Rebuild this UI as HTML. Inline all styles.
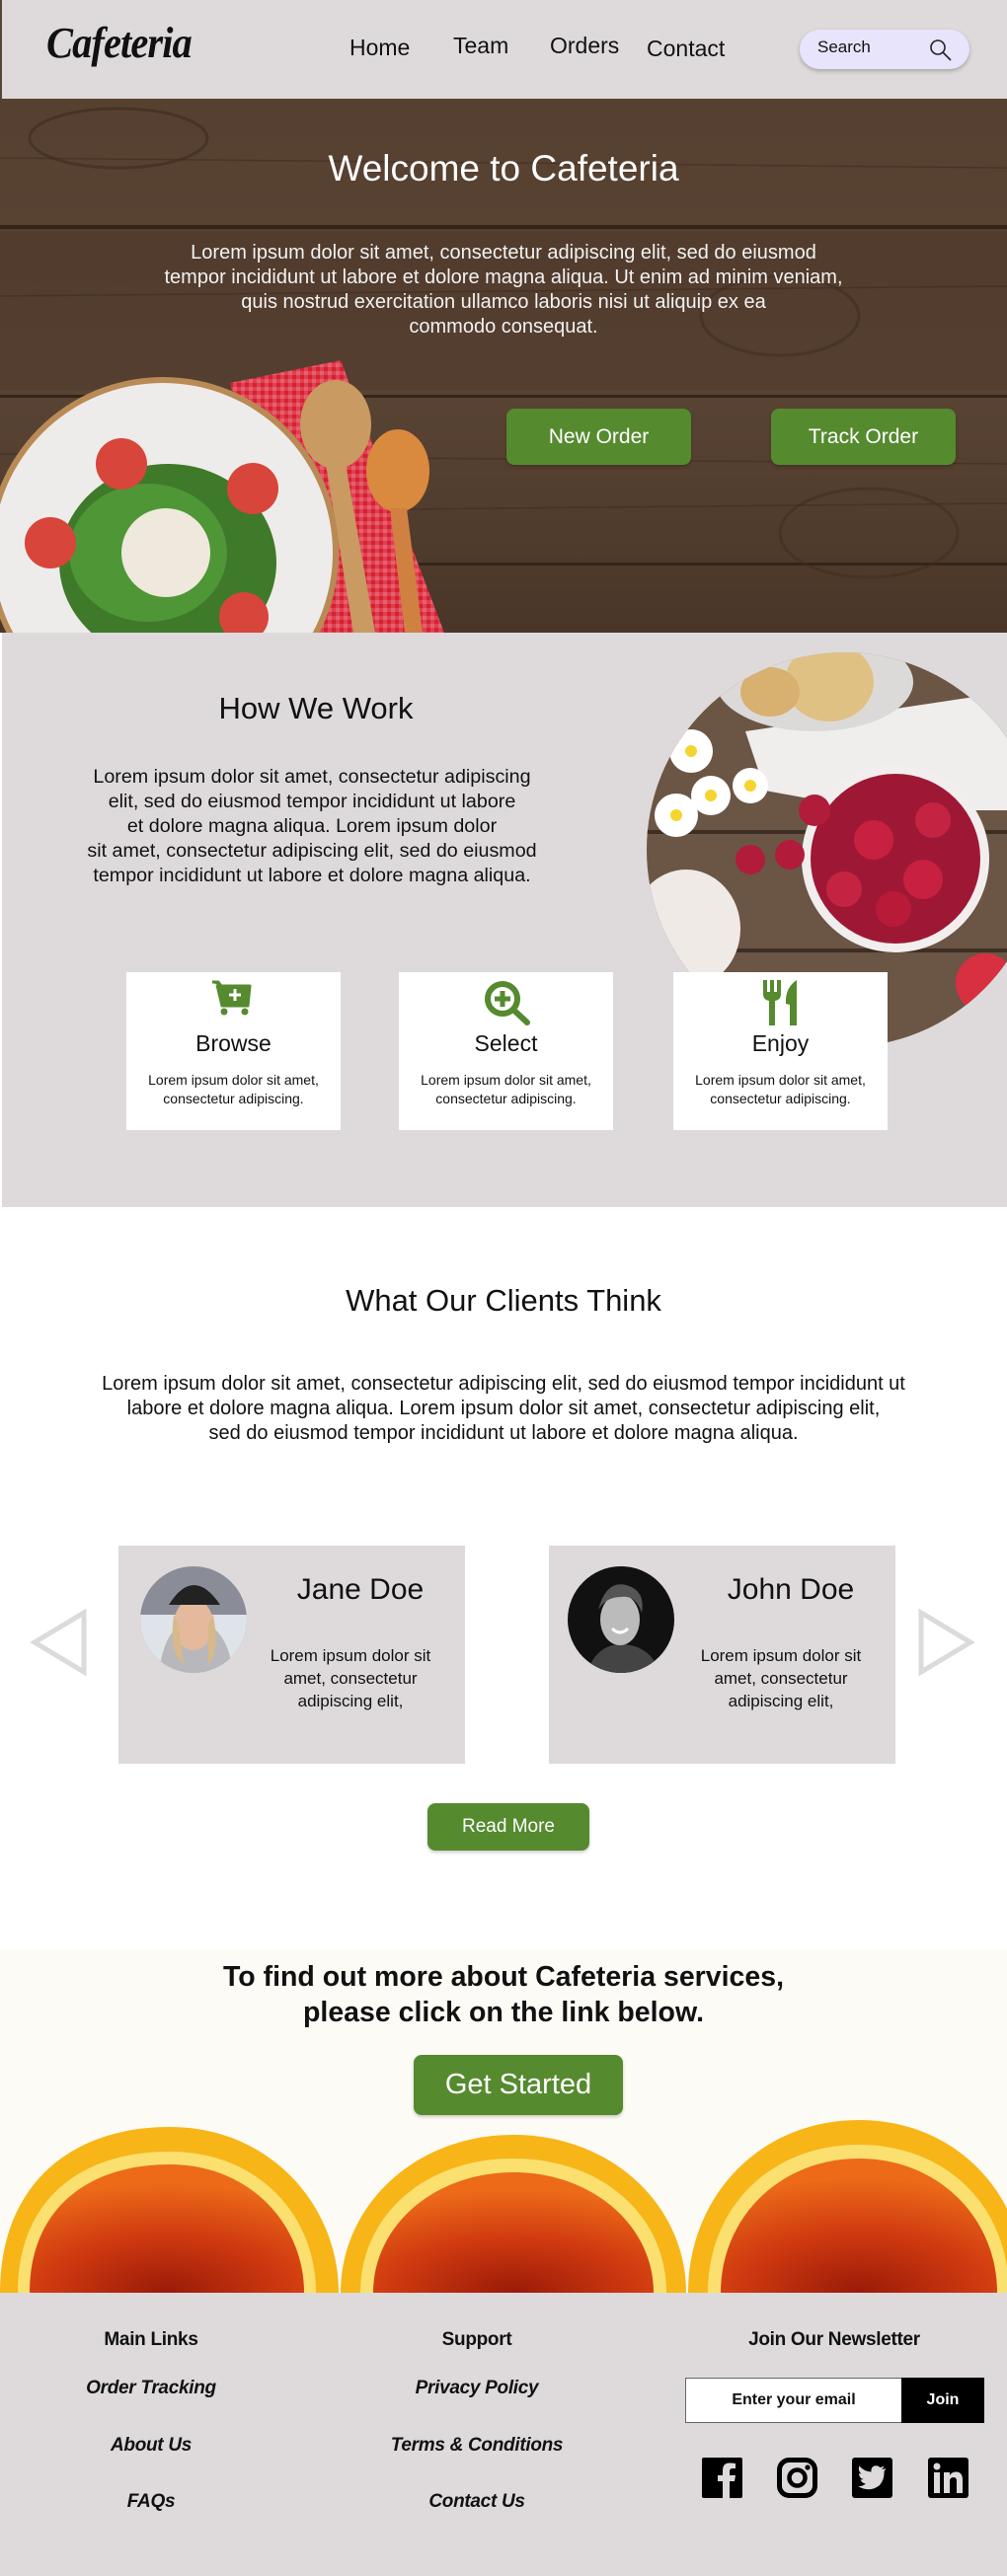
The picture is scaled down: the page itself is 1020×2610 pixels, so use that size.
<!DOCTYPE html>
<html><head><meta charset="utf-8">
<style>
*{margin:0;padding:0;box-sizing:border-box}
body{width:1020px;height:2610px;position:relative;overflow:hidden;background:#fff;font-family:"Liberation Sans",sans-serif;color:#111}
.a{position:absolute}
.c{text-align:center;white-space:nowrap}
.btn{position:absolute;background:#558a2f;color:#fff;border-radius:8px;text-align:center;box-shadow:0 2px 3px rgba(0,0,0,.2)}
.card{position:absolute;background:#fff;width:217px;height:160px;top:985px}
.card h3{position:absolute;top:59px;width:100%;text-align:center;font-weight:normal;font-size:23px}
.card p{position:absolute;top:100px;width:100%;text-align:center;font-size:14px;line-height:19px}
.tc{position:absolute;background:#dedadb;top:1566px;width:351px;height:221px}
.tc h3{position:absolute;left:150px;width:190px;text-align:center;top:28px;font-weight:normal;font-size:30px}
.tc p{position:absolute;left:135px;width:200px;text-align:center;top:100px;font-size:17px;line-height:23px}
.fl{position:absolute;width:300px;text-align:center;font-size:19px;font-style:italic;font-weight:bold;letter-spacing:-0.3px}
.fh{position:absolute;width:300px;text-align:center;font-size:19px;font-weight:bold;top:2360px;letter-spacing:-0.3px}
</style></head><body>

<!-- header -->
<div class="a" style="left:0;top:0;width:1020px;height:100px;background:#dedadb;border-left:2px solid #5a4636"></div>
<div class="a" style="left:47px;top:18px;font-family:'Liberation Serif',serif;font-style:italic;font-weight:bold;font-size:44px;letter-spacing:-1px;transform:scaleX(0.92);transform-origin:left">Cafeteria</div>
<div class="a" style="left:354px;top:35px;font-size:23px">Home</div>
<div class="a" style="left:459px;top:33px;font-size:23px">Team</div>
<div class="a" style="left:557px;top:33px;font-size:23px">Orders</div>
<div class="a" style="left:655px;top:36px;font-size:23px">Contact</div>
<div class="a" style="left:810px;top:30px;width:172px;height:40px;border-radius:20px;background:#e8e4fb;box-shadow:0 2px 4px rgba(0,0,0,.25)"></div>
<div class="a" style="left:828px;top:38px;font-size:17px">Search</div>
<svg class="a" style="left:940px;top:38px" width="26" height="26" viewBox="0 0 26 26"><circle cx="10" cy="10" r="7" fill="none" stroke="#222" stroke-width="1.6"/><line x1="15" y1="15" x2="23" y2="23" stroke="#222" stroke-width="1.6"/></svg>

<!-- hero -->
<svg class="a" style="left:0;top:100px" width="1020" height="541" viewBox="0 0 1020 541">
<defs>
<linearGradient id="w" x1="0" y1="0" x2="0" y2="1"><stop offset="0" stop-color="#4e3a2c"/><stop offset=".5" stop-color="#5a4535"/><stop offset="1" stop-color="#4a3628"/></linearGradient>
<pattern id="chk" width="8" height="8" patternUnits="userSpaceOnUse"><rect width="8" height="8" fill="#fff"/><rect width="4" height="4" fill="#d62030"/><rect x="4" y="4" width="4" height="4" fill="#e46070"/><rect x="4" width="4" height="4" fill="#e04050"/><rect y="4" width="4" height="4" fill="#e04050"/></pattern>
</defs>
<rect width="1020" height="541" fill="url(#w)"/>
<rect y="0" width="1020" height="128" fill="#5b4434" opacity=".6"/>
<rect y="128" width="1020" height="4" fill="#33251b"/>
<rect y="300" width="1020" height="3" fill="#33251b"/>
<rect y="470" width="1020" height="3" fill="#33251b"/>
<rect y="135" width="1020" height="160" fill="#4d3829" opacity=".5"/>
<g stroke="#3b2a1e" stroke-width="1.5" opacity=".5"><line x1="0" y1="60" x2="1020" y2="70"/><line x1="0" y1="200" x2="1020" y2="190"/><line x1="0" y1="360" x2="1020" y2="370"/><line x1="0" y1="420" x2="1020" y2="410"/></g>
<ellipse cx="120" cy="40" rx="90" ry="30" fill="none" stroke="#3d2b1f" stroke-width="3" opacity=".6"/>
<ellipse cx="790" cy="220" rx="80" ry="40" fill="none" stroke="#3d2b1f" stroke-width="3" opacity=".5"/>
<ellipse cx="880" cy="440" rx="90" ry="45" fill="none" stroke="#3d2b1f" stroke-width="3" opacity=".5"/>
<polygon points="233,288 345,265 450,541 300,541" fill="url(#chk)"/>
<ellipse cx="340" cy="330" rx="36" ry="45" fill="#c99a62"/>
<path d="M330 370 L350 370 L380 541 L358 541 Z" fill="#c99a62"/>
<ellipse cx="403" cy="377" rx="32" ry="42" fill="#d98a3e"/>
<path d="M395 415 L412 415 L428 541 L410 541 Z" fill="#d08040"/>
<circle cx="165" cy="460" r="178" fill="#b98a55"/>
<circle cx="165" cy="460" r="172" fill="#eeecea"/>
<ellipse cx="170" cy="470" rx="110" ry="100" fill="#3f7a2a"/>
<ellipse cx="150" cy="460" rx="80" ry="70" fill="#4f9636"/>
<circle cx="123" cy="370" r="26" fill="#d8453a"/>
<circle cx="256" cy="395" r="26" fill="#d8453a"/>
<circle cx="51" cy="450" r="26" fill="#d8453a"/>
<circle cx="247" cy="525" r="25" fill="#d8453a"/>
<ellipse cx="168" cy="460" rx="45" ry="45" fill="#eee9dc"/>
</svg>
<div class="a c" style="left:0;width:1020px;top:150px;font-size:37px;color:#fff">Welcome to Cafeteria</div>
<div class="a c" style="left:0;width:1020px;top:244px;font-size:20px;line-height:25px;color:#f2f2f2">Lorem ipsum dolor sit amet, consectetur adipiscing elit, sed do eiusmod<br>tempor incididunt ut labore et dolore magna aliqua. Ut enim ad minim veniam,<br>quis nostrud exercitation ullamco laboris nisi ut aliquip ex ea<br>commodo consequat.</div>
<div class="btn" style="left:513px;top:414px;width:187px;height:57px;line-height:57px;font-size:21px">New Order</div>
<div class="btn" style="left:781px;top:414px;width:187px;height:57px;line-height:57px;font-size:21px">Track Order</div>

<!-- how we work -->
<div class="a" style="left:0;top:641px;width:1020px;height:582px;background:#dedadb;border-left:2px solid #fff"></div>
<svg class="a" style="left:655px;top:661px" width="365" height="400" viewBox="0 0 365 400">
<defs><clipPath id="cc"><circle cx="200" cy="200" r="200"/></clipPath></defs>
<g clip-path="url(#cc)">
<rect width="400" height="400" fill="#6b5544"/>
<rect y="180" width="400" height="4" fill="#3e2f24"/><rect y="300" width="400" height="4" fill="#3e2f24"/>
<path d="M100 80 L365 40 L365 160 L230 160 L120 140 Z" fill="#f0eeec"/>
<ellipse cx="170" cy="30" rx="100" ry="50" fill="#dcdad8"/>
<ellipse cx="185" cy="30" rx="45" ry="40" fill="#e0c184"/>
<ellipse cx="125" cy="40" rx="30" ry="25" fill="#d8b070"/>
<circle cx="252" cy="209" r="95" fill="#f2eeee"/>
<circle cx="252" cy="209" r="86" fill="#9e1835"/>
<circle cx="230" cy="190" r="20" fill="#c82040"/><circle cx="280" cy="230" r="20" fill="#c82040"/><circle cx="250" cy="260" r="18" fill="#b81a38"/><circle cx="290" cy="170" r="18" fill="#c42442"/><circle cx="200" cy="240" r="18" fill="#c42442"/>
<g fill="#fff"><circle cx="45" cy="100" r="22"/><circle cx="65" cy="145" r="20"/><circle cx="30" cy="165" r="22"/><circle cx="105" cy="135" r="18"/></g>
<g fill="#f5d430"><circle cx="45" cy="100" r="6"/><circle cx="65" cy="145" r="6"/><circle cx="30" cy="165" r="6"/><circle cx="105" cy="135" r="6"/></g>
<circle cx="105" cy="210" r="15" fill="#b01c3a"/><circle cx="145" cy="205" r="15" fill="#b01c3a"/><circle cx="170" cy="160" r="16" fill="#b01c3a"/>
<ellipse cx="40" cy="280" rx="55" ry="60" fill="#efeae6"/>
<circle cx="343" cy="335" r="30" fill="#d83040"/>
</g></svg>
<div class="a c" style="left:120px;width:400px;top:700px;font-size:31px">How We Work</div>
<div class="a c" style="left:66px;width:500px;top:775px;font-size:19.7px;line-height:25px">Lorem ipsum dolor sit amet, consectetur adipiscing<br>elit, sed do eiusmod tempor incididunt ut labore<br>et dolore magna aliqua. Lorem ipsum dolor<br>sit amet, consectetur adipiscing elit, sed do eiusmod<br>tempor incididunt ut labore et dolore magna aliqua.</div>

<div class="card" style="left:128px">
<svg class="a" style="left:85px;top:8px" width="42" height="36" viewBox="0 0 42 36"><path d="M2 2 L8 2 L11 6 L40 6 L38 26 L12 26 L7 5" fill="#558a2f" stroke="#558a2f" stroke-width="3" stroke-linejoin="round"/><circle cx="14" cy="32" r="3.5" fill="#558a2f"/><circle cx="35" cy="32" r="3.5" fill="#558a2f"/><path d="M25 9 V21 M19 15 H31" stroke="#fff" stroke-width="3"/></svg>
<h3>Browse</h3><p>Lorem ipsum dolor sit amet,<br>consectetur adipiscing.</p></div>
<div class="card" style="left:404px">
<svg class="a" style="left:86px;top:8px" width="50" height="46" viewBox="0 0 50 46"><circle cx="19" cy="19" r="15" fill="none" stroke="#558a2f" stroke-width="6"/><path d="M19 11 V27 M11 19 H27" stroke="#558a2f" stroke-width="5"/><line x1="30" y1="30" x2="44" y2="43" stroke="#558a2f" stroke-width="6" stroke-linecap="round"/></svg>
<h3>Select</h3><p>Lorem ipsum dolor sit amet,<br>consectetur adipiscing.</p></div>
<div class="card" style="left:682px">
<svg class="a" style="left:89px;top:8px" width="40" height="46" viewBox="0 0 40 46"><path d="M2 0 V14 Q2 20 8 21 V46 H14 V21 Q20 20 20 14 V0 H16 V12 H13 V0 H9 V12 H6 V0 Z" fill="#558a2f"/><path d="M36 0 Q24 8 25 24 L29 25 V46 H36 Z" fill="#558a2f"/></svg>
<h3>Enjoy</h3><p>Lorem ipsum dolor sit amet,<br>consectetur adipiscing.</p></div>

<!-- clients -->
<div class="a c" style="left:0;width:1020px;top:1300px;font-size:31px">What Our Clients Think</div>
<div class="a c" style="left:0;width:1020px;top:1390px;font-size:20px;line-height:25px">Lorem ipsum dolor sit amet, consectetur adipiscing elit, sed do eiusmod tempor incididunt ut<br>labore et dolore magna aliqua. Lorem ipsum dolor sit amet, consectetur adipiscing elit,<br>sed do eiusmod tempor incididunt ut labore et dolore magna aliqua.</div>
<svg class="a" style="left:30px;top:1630px" width="60" height="68" viewBox="0 0 60 68"><polygon points="55,4 55,64 5,34" fill="none" stroke="#dcdadb" stroke-width="5"/></svg>
<svg class="a" style="left:928px;top:1630px" width="60" height="68" viewBox="0 0 60 68"><polygon points="5,4 5,64 55,34" fill="none" stroke="#dcdadb" stroke-width="5"/></svg>
<div class="tc" style="left:120px">
<svg class="a" style="left:21px;top:20px" width="110" height="110" viewBox="0 0 110 110"><defs><clipPath id="a1"><ellipse cx="55" cy="55" rx="54" ry="54"/></clipPath></defs><g clip-path="url(#a1)"><rect width="110" height="110" fill="#8a8d98"/><rect y="50" width="110" height="60" fill="#dfe3ea"/><path d="M20 110 Q25 60 55 55 Q90 60 95 110 Z" fill="#b8b8bc"/><ellipse cx="55" cy="60" rx="20" ry="26" fill="#e5b99c"/><path d="M30 40 Q55 0 82 40 Z" fill="#222"/><path d="M35 50 Q30 90 45 100 L40 60 Z M75 50 Q82 90 70 100 L70 60Z" fill="#d7b98a"/></g></svg>
<h3>Jane Doe</h3><p>Lorem ipsum dolor sit<br>amet, consectetur<br>adipiscing elit,</p></div>
<div class="tc" style="left:556px">
<svg class="a" style="left:18px;top:20px" width="110" height="110" viewBox="0 0 110 110"><defs><clipPath id="a2"><ellipse cx="55" cy="55" rx="54" ry="54"/></clipPath></defs><g clip-path="url(#a2)"><rect width="110" height="110" fill="#111"/><path d="M20 110 Q30 80 55 80 Q85 80 95 110 Z" fill="#444"/><ellipse cx="54" cy="55" rx="20" ry="26" fill="#bbb"/><path d="M32 45 Q40 15 60 20 Q80 25 76 48 Q70 30 55 32 Q40 32 32 45 Z" fill="#555"/><path d="M46 64 Q54 72 62 64" stroke="#fff" stroke-width="3" fill="none"/></g></svg>
<h3>John Doe</h3><p>Lorem ipsum dolor sit<br>amet, consectetur<br>adipiscing elit,</p></div>
<div class="btn" style="left:433px;top:1827px;width:164px;height:48px;line-height:48px;font-size:19px">Read More</div>

<!-- cta -->
<svg class="a" style="left:0;top:1975px" width="1020" height="348" viewBox="0 0 1020 348">
<defs><radialGradient id="og" cx=".5" cy="1" r="1"><stop offset="0" stop-color="#9a1a08"/><stop offset=".45" stop-color="#d03a10"/><stop offset=".85" stop-color="#ec6a18"/></radialGradient></defs>
<rect width="1020" height="348" fill="#fdfbf5"/>
<path d="M0 348 C0 240 70 180 172 180 C274 180 343 260 343 348 Z" fill="#f7b518"/>
<path d="M18 348 C18 255 80 205 172 205 C262 205 320 270 320 348 Z" fill="#fbe070"/>
<path d="M30 348 C30 262 90 218 172 218 C252 218 308 278 308 348 Z" fill="url(#og)"/>
<path d="M345 348 C345 260 420 188 520 188 C620 188 695 260 695 348 Z" fill="#f7b518"/>
<path d="M365 348 C365 270 430 212 520 212 C610 212 675 270 675 348 Z" fill="#fbe070"/>
<path d="M378 348 C378 280 440 226 520 226 C600 226 662 280 662 348 Z" fill="url(#og)"/>
<path d="M697 348 C697 250 770 173 870 173 C970 173 1040 250 1040 348 Z" fill="#f7b518"/>
<path d="M717 348 C717 262 780 198 870 198 C960 198 1022 262 1022 348 Z" fill="#fbe070"/>
<path d="M730 348 C730 272 790 212 870 212 C950 212 1010 272 1010 348 Z" fill="url(#og)"/>
</svg>
<div class="a c" style="left:0;width:1020px;top:1985px;font-size:28.5px;line-height:36px;font-weight:bold">To find out more about Cafeteria services,<br>please click on the link below.</div>
<div class="btn" style="left:419px;top:2082px;width:212px;height:61px;line-height:61px;font-size:29px">Get Started</div>

<!-- footer -->
<div class="a" style="left:0;top:2323px;width:1020px;height:287px;background:#dedadb"></div>
<div class="fh" style="left:3px">Main Links</div>
<div class="fh" style="left:333px">Support</div>
<div class="fh" style="left:695px">Join Our Newsletter</div>
<div class="fl" style="left:3px;top:2409px">Order Tracking</div>
<div class="fl" style="left:3px;top:2467px">About Us</div>
<div class="fl" style="left:3px;top:2524px">FAQs</div>
<div class="fl" style="left:333px;top:2409px">Privacy Policy</div>
<div class="fl" style="left:333px;top:2467px">Terms &amp; Conditions</div>
<div class="fl" style="left:333px;top:2524px">Contact Us</div>
<div class="a" style="left:694px;top:2409px;width:220px;height:46px;background:#fff;border:1px solid #666;text-align:center;line-height:44px;font-size:16px;font-weight:bold">Enter your email</div>
<div class="a" style="left:913px;top:2409px;width:84px;height:46px;background:#000;color:#fff;text-align:center;line-height:46px;font-size:16px;font-weight:bold">Join</div>
<svg class="a" style="left:711px;top:2490px" width="41" height="41" viewBox="0 0 41 41"><rect width="41" height="41" rx="2" fill="#000"/><path d="M28 41 V24 H33 L34 18 H28 V14 Q28 11 31 11 H34 V6 Q31 5.5 28 5.5 Q21 5.5 21 13 V18 H16 V24 H21 V41 Z" fill="#dedadb"/></svg>
<svg class="a" style="left:787px;top:2490px" width="41" height="41" viewBox="0 0 41 41"><rect x="2.5" y="2.5" width="36" height="36" rx="10" fill="none" stroke="#000" stroke-width="5"/><circle cx="20.5" cy="20.5" r="8" fill="none" stroke="#000" stroke-width="4.5"/><circle cx="31" cy="10" r="2.6" fill="#000"/></svg>
<svg class="a" style="left:863px;top:2490px" width="41" height="41" viewBox="0 0 41 41"><rect width="41" height="41" rx="3" fill="#000"/><path d="M34 11 Q32 12 30 12 Q32 10.5 32.5 8.5 Q30.5 9.7 28.5 10 Q26 7.5 22.5 8.5 Q19 10 19.5 14.5 Q12 14 7.5 8.5 Q5.5 13 9.5 16.5 Q8 16.5 7 16 Q7 20.5 11.5 22 Q10 22.5 8.5 22.2 Q10 26 14 26.5 Q10.5 29.5 6 29 Q18 36 28 28 Q33 22 32.5 14 Q34 12.8 34 11 Z" fill="#dedadb"/></svg>
<svg class="a" style="left:940px;top:2490px" width="41" height="41" viewBox="0 0 41 41"><rect width="41" height="41" rx="3" fill="#000"/><rect x="6" y="15" width="6" height="21" fill="#dedadb"/><circle cx="9" cy="9" r="3.5" fill="#dedadb"/><path d="M16 15 H22 V18 Q24 14.5 28.5 14.5 Q35 14.5 35 23 V36 H29 V24 Q29 20 26 20 Q22 20 22 24 V36 H16 Z" fill="#dedadb"/></svg>
</body></html>
